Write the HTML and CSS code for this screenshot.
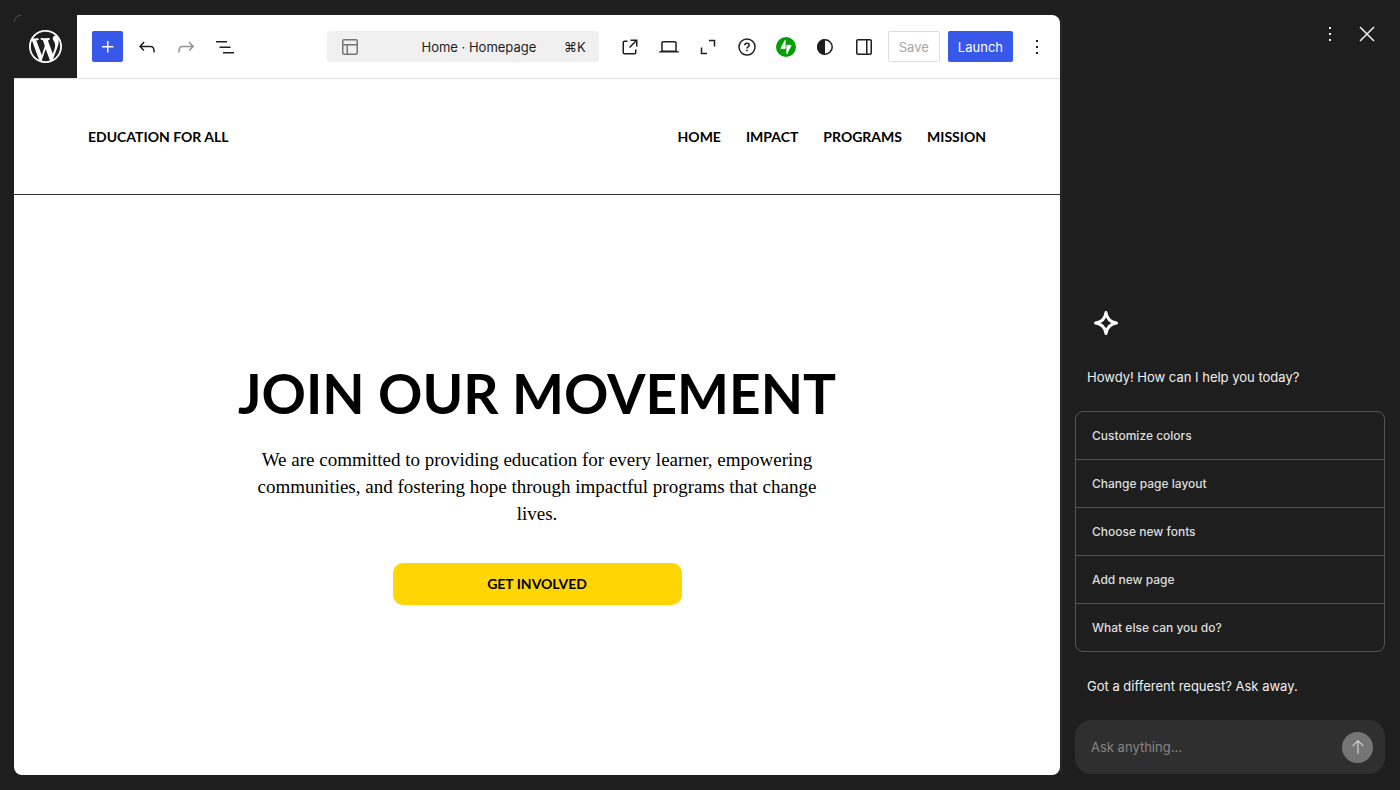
FILE: index.html
```html
<!DOCTYPE html>
<html lang="en">

<head>
    <meta charset="UTF-8">
    <meta name="viewport" content="width=device-width, initial-scale=1.0">
    <title>Homepage - Site Editor</title>
    <link rel="stylesheet" href="styles.css">
</head>

<body>
    <div class="app">
        <div class="editor">
            <header class="toolbar">
                <a class="site-logo" href="#" aria-label="View dashboard">
                    <svg viewBox="0 0 20 20"><path d="M20 10c0-5.51-4.49-10-10-10C4.48 0 0 4.49 0 10c0 5.52 4.48 10 10 10 5.51 0 10-4.48 10-10zM7.78 15.37L4.37 6.22c.55-.02 1.17-.08 1.17-.08.5-.06.44-1.13-.06-1.11 0 0-1.45.11-2.37.11-.18 0-.37 0-.58-.01C4.12 2.69 6.87 1.11 10 1.11c2.33 0 4.45.87 6.05 2.34-.68-.11-1.65.39-1.65 1.58 0 .74.45 1.36.9 2.1.35.61.55 1.36.55 2.46 0 1.49-1.4 5-1.4 5l-3.03-8.37c.54-.02.82-.17.82-.17.5-.05.44-1.25-.06-1.22 0 0-1.44.12-2.38.12-.87 0-2.33-.12-2.33-.12-.5-.03-.56 1.2-.06 1.22l.92.08 1.26 3.41zM17.41 10c.24-.64.74-1.87.43-4.25.7 1.29 1.05 2.71 1.05 4.25 0 3.29-1.73 6.24-4.4 7.78.97-2.59 1.94-5.2 2.92-7.78zM6.1 18.09C3.12 16.65 1.11 13.53 1.11 10c0-1.3.23-2.48.72-3.59C3.25 10.3 4.67 14.2 6.1 18.09zm4.03-6.63l2.58 6.98c-.86.29-1.76.45-2.71.45-.79 0-1.57-.11-2.29-.33.81-2.38 1.62-4.74 2.42-7.1z"/></svg>
                </a>

                <div class="tools tools-left">
                    <button class="icon-button add-button" aria-label="Add block">
                        <svg viewBox="0 0 24 24"><path d="M11 12.5V17.5H12.5V12.5H17.5V11H12.5V6H11V11H6V12.5H11Z"/></svg>
                    </button>
                    <button class="icon-button" aria-label="Undo">
                        <svg viewBox="0 0 24 24"><path d="M18.3 11.7c-.6-.6-1.4-.9-2.3-.9H6.7l2.9-3.3-1.1-1-4.5 5L8.5 16l1-1-2.7-2.7H16c.5 0 .9.2 1.3.5 1 1 1 3.4 1 4.5v.3h1.5v-.2c0-1.5 0-4.3-1.5-5.7z"/></svg>
                    </button>
                    <button class="icon-button" aria-label="Redo" disabled>
                        <svg viewBox="0 0 24 24"><path d="M15.6 6.5l-1.1 1 2.9 3.3H8c-.9 0-1.7.3-2.3.9-1.4 1.5-1.4 4.2-1.4 5.6v.2h1.5v-.3c0-1.1 0-3.5 1-4.5.3-.3.7-.5 1.3-.5h9.2L14.5 15l1.1 1.1 4.6-4.6-4.6-5z"/></svg>
                    </button>
                    <button class="icon-button" aria-label="Document overview">
                        <svg viewBox="0 0 24 24"><path d="M3 6h11v1.5H3V6Zm3.5 5.5h11V13h-11v-1.5ZM21 17H10v1.5h11V17Z"/></svg>
                    </button>
                </div>

                <button class="command-bar">
                    <svg viewBox="0 0 24 24"><path d="M18 5.5H6a.5.5 0 00-.5.5v3h13V6a.5.5 0 00-.5-.5zm.5 5H10v8h8a.5.5 0 00.5-.5v-7.5zm-10 0h-3V18a.5.5 0 00.5.5h2.5v-8zM6 4h12a2 2 0 012 2v12a2 2 0 01-2 2H6a2 2 0 01-2-2V6a2 2 0 012-2z"/></svg>
                    <span class="command-title">Home · Homepage</span>
                    <span class="command-key">⌘K</span>
                </button>

                <div class="tools">
                    <button class="icon-button" aria-label="View site">
                        <svg viewBox="0 0 24 24"><path d="M19.5 4.5h-7V6h4.44l-5.97 5.97 1.06 1.06L18 7.06v4.44h1.5v-7Zm-13 1a2 2 0 0 0-2 2v10a2 2 0 0 0 2 2h10a2 2 0 0 0 2-2v-3H17v3a.5.5 0 0 1-.5.5h-10a.5.5 0 0 1-.5-.5v-10a.5.5 0 0 1 .5-.5h3V5.5h-3Z"/></svg>
                    </button>
                    <button class="icon-button" aria-label="Preview">
                        <svg viewBox="0 0 24 24"><path d="M20.5 16h-.7V8c0-1.1-.9-2-2-2H6.2c-1.1 0-2 .9-2 2v8h-.7c-.8 0-1.5.7-1.5 1.5h20c0-.8-.7-1.5-1.5-1.5zM5.7 8c0-.3.2-.5.5-.5h11.6c.3 0 .5.2.5.5v7.6H5.7V8z"/></svg>
                    </button>
                    <button class="icon-button" aria-label="Zoom out">
                        <svg viewBox="0 0 24 24"><path class="stroke" d="M5.5 12.5v6H11M13 5.500h5.500v6"/></svg>
                    </button>
                    <button class="icon-button" aria-label="Help">
                        <svg viewBox="0 0 24 24"><circle class="stroke" cx="12" cy="12" r="8"/><path class="stroke" d="M9.8 10.3c0-1.3 1-2.1 2.2-2.1s2.2.8 2.2 2c0 1.7-2.2 1.7-2.2 3.4"/><path d="M11.2 14.7h1.6v1.6h-1.6z"/></svg>
                    </button>
                    <button class="icon-button" aria-label="Jetpack">
                        <svg viewBox="0 0 24 24"><circle cx="12" cy="12" r="10" fill="#069e08"/><path d="M11.200 5.200v8.400H6.800zM12.800 18.800v-8.400h4.400z" fill="#fff" stroke="#fff" stroke-width=".8"/></svg>
                    </button>
                    <button class="icon-button" aria-label="Styles">
                        <svg viewBox="0 0 24 24"><circle class="stroke" cx="12" cy="12" r="7.2"/><path d="M12 4a8 8 0 0 0 0 16z"/></svg>
                    </button>
                    <button class="icon-button" aria-label="Settings">
                        <svg viewBox="0 0 24 24"><path d="M18 4H6c-1.1 0-2 .9-2 2v12c0 1.1.9 2 2 2h12c1.1 0 2-.9 2-2V6c0-1.1-.9-2-2-2zm-4 14.5H6c-.3 0-.5-.2-.5-.5V6c0-.3.2-.5.5-.5h8v13zm4.5-.5c0 .3-.2.5-.5.5h-2.5v-13H18c.3 0 .5.2.5.5v12z"/></svg>
                    </button>
                    <button class="button save-button" disabled>Save</button>
                    <button class="button launch-button">Launch</button>
                    <button class="icon-button" aria-label="Options">
                        <svg viewBox="0 0 24 24"><path d="M13 19h-2v-2h2v2zm0-6h-2v-2h2v2zm0-6h-2V5h2v2z"/></svg>
                    </button>
                </div>
            </header>

            <div class="canvas">
                <div class="site-header">
                    <a class="site-title" href="#">EDUCATION FOR ALL</a>
                    <nav class="site-nav">
                        <a href="#">HOME</a>
                        <a href="#">IMPACT</a>
                        <a href="#">PROGRAMS</a>
                        <a href="#">MISSION</a>
                    </nav>
                </div>
                <main class="hero">
                    <h1>JOIN OUR MOVEMENT</h1>
                    <p>We are committed to providing education for every learner, empowering communities, and fostering hope through impactful programs that change lives.</p>
                    <a class="hero-button" href="#">GET INVOLVED</a>
                </main>
            </div>
        </div>

        <aside class="assistant">
            <div class="assistant-header">
                <button class="icon-button" aria-label="More options">
                    <svg viewBox="0 0 24 24"><path d="M13 19h-2v-2h2v2zm0-6h-2v-2h2v2zm0-6h-2V5h2v2z"/></svg>
                </button>
                <button class="icon-button" aria-label="Close">
                    <svg viewBox="0 0 24 24"><path class="stroke" d="M5 5l14 14M19 5L5 19"/></svg>
                </button>
            </div>

            <div class="assistant-body">
                <svg class="sparkle" viewBox="0 0 26 26"><path d="M13 2.500Q14.300 11.700 23.500 13Q14.300 14.300 13 23.500Q11.700 14.300 2.500 13Q11.700 11.700 13 2.500z"/></svg>
                <p class="message">Howdy! How can I help you today?</p>
                <ul class="suggestions">
                    <li><button>Customize colors</button></li>
                    <li><button>Change page layout</button></li>
                    <li><button>Choose new fonts</button></li>
                    <li><button>Add new page</button></li>
                    <li><button>What else can you do?</button></li>
                </ul>
                <p class="message">Got a different request? Ask away.</p>
            </div>

            <form class="prompt">
                <input type="text" aria-label="Ask anything" placeholder="Ask anything...">
                <button type="button" class="send-button" aria-label="Send">
                    <svg viewBox="0 0 24 24"><path class="stroke" d="M12 20V4.500M5.500 11L12 4.500l6.500 6.500"/></svg>
                </button>
            </form>
        </aside>
    </div>
</body>

</html>
```
FILE: styles.css
```css
* {
    box-sizing: border-box;
}

body {
    margin: 0;
    background-color: #1e1e1e;
    color: #1e1e1e;
    font-family: Inter, sans-serif;
    font-size: 13px;
}

button, input {
    font: inherit;
    color: inherit;
}

button {
    padding: 0;
    border: none;
    background: none;
    cursor: pointer;
}

a {
    color: inherit;
    text-decoration: none;
}

svg {
    display: block;
    flex: none;
    width: 24px;
    height: 24px;
    fill: currentColor;
}

.stroke {
    fill: none;
    stroke: currentColor;
    stroke-width: 1.5;
}

.app {
    display: flex;
    min-height: 100vh;
    padding: 15px 0 15px 14px;
}

/* Editor */
.editor {
    display: flex;
    flex-direction: column;
    flex: 1;
    min-width: 0;
    border-radius: 8px;
    background-color: #fff;
    overflow: hidden;
}

.toolbar {
    display: flex;
    align-items: center;
    height: 64px;
    padding-right: 8px;
    border-bottom: 1px solid #e0e0e0;
}

.site-logo {
    display: flex;
    align-items: center;
    justify-content: center;
    width: 63px;
    height: 63px;
    background-color: #1e1e1e;
    color: #fff;
}

.site-logo svg {
    width: 33px;
    height: 33px;
}

.tools {
    display: flex;
    align-items: center;
    gap: 8px;
}

.tools-left {
    margin-left: 15px;
}

.icon-button {
    display: flex;
    align-items: center;
    justify-content: center;
    width: 31px;
    height: 31px;
}

.icon-button:disabled {
    color: #949494;
}

.add-button {
    border-radius: 2px;
    background-color: #3858e9;
    color: #fff;
}

.command-bar {
    display: flex;
    align-items: center;
    flex: 0 1 272px;
    height: 31px;
    margin: 0 16px 0 auto;
    padding: 0 13px 0 11px;
    border-radius: 4px;
    background-color: #f0f0f0;
}

.command-bar svg {
    color: #757575;
}

.command-title {
    flex: 1;
    padding-left: 32px;
}

.button {
    height: 31px;
    padding: 0 10px;
    border-radius: 2px;
}

.save-button {
    border: 1px solid #ddd;
    color: #a7a7a7;
}

.launch-button {
    background-color: #3858e9;
    color: #fff;
}

/* Page preview */
.canvas {
    display: flex;
    flex-direction: column;
    flex: 1;
    color: #000;
    font-family: Lato, sans-serif;
}

.site-header {
    display: flex;
    align-items: center;
    justify-content: space-between;
    height: 116px;
    padding: 0 74px;
    border-bottom: 1px solid #333;
    font-size: 14px;
    font-weight: bold;
}

.site-nav {
    display: flex;
    gap: 25px;
}

.hero {
    display: flex;
    flex-direction: column;
    align-items: center;
    justify-content: center;
    flex: 1;
    padding-bottom: 6px;
    text-align: center;
}

.hero h1 {
    margin: 0 0 20px;
    font-size: 55px;
    line-height: 66px;
}

.hero p {
    max-width: 590px;
    margin: 0 0 36px;
    font-family: "Liberation Serif", serif;
    font-size: 19px;
    line-height: 27px;
}

.hero-button {
    width: 289px;
    border-radius: 10px;
    background-color: #ffd504;
    font-size: 14px;
    font-weight: bold;
    line-height: 42px;
}

/* Assistant */
.assistant {
    display: flex;
    flex-direction: column;
    flex: 0 0 339px;
    margin-left: 1px;
    padding: 0 15px 1px 13px;
    border-left: 1px solid #2c2c2c;
    color: #f0f0f0;
}

.assistant-header {
    display: flex;
    justify-content: flex-end;
    gap: 6px;
    padding-top: 3px;
    margin-right: 3px;
}

.assistant-body {
    margin-top: auto;
}

.sparkle {
    width: 26px;
    height: 26px;
    margin-left: 18px;
    fill: none;
    stroke: #fff;
    stroke-width: 3;
    stroke-linejoin: round;
}

.message {
    margin: 0;
    padding: 24px 12px;
    line-height: 20px;
}

.sparkle + .message {
    padding-top: 31px;
}

.suggestions {
    margin: 0;
    padding: 0;
    border: 1px solid #555;
    border-radius: 8px;
    list-style: none;
}

.suggestions li + li {
    border-top: 1px solid #555;
}

.suggestions button {
    width: 100%;
    height: 47px;
    padding: 0 16px;
    color: #ddd;
    font-size: 12px;
    font-weight: 500;
    text-align: left;
}

.prompt {
    display: flex;
    align-items: center;
    height: 54px;
    padding: 0 12px 0 16px;
    border-radius: 16px;
    background-color: #2f2f2f;
}

.prompt input {
    flex: 1;
    min-width: 0;
    padding: 0;
    border: none;
    outline: none;
    background: none;
}

.prompt input::placeholder {
    color: #858585;
}

.send-button {
    display: flex;
    align-items: center;
    justify-content: center;
    width: 31px;
    height: 31px;
    border-radius: 50%;
    background-color: #757575;
    color: #ccc;
}

.send-button svg {
    width: 20px;
    height: 20px;
}
```
